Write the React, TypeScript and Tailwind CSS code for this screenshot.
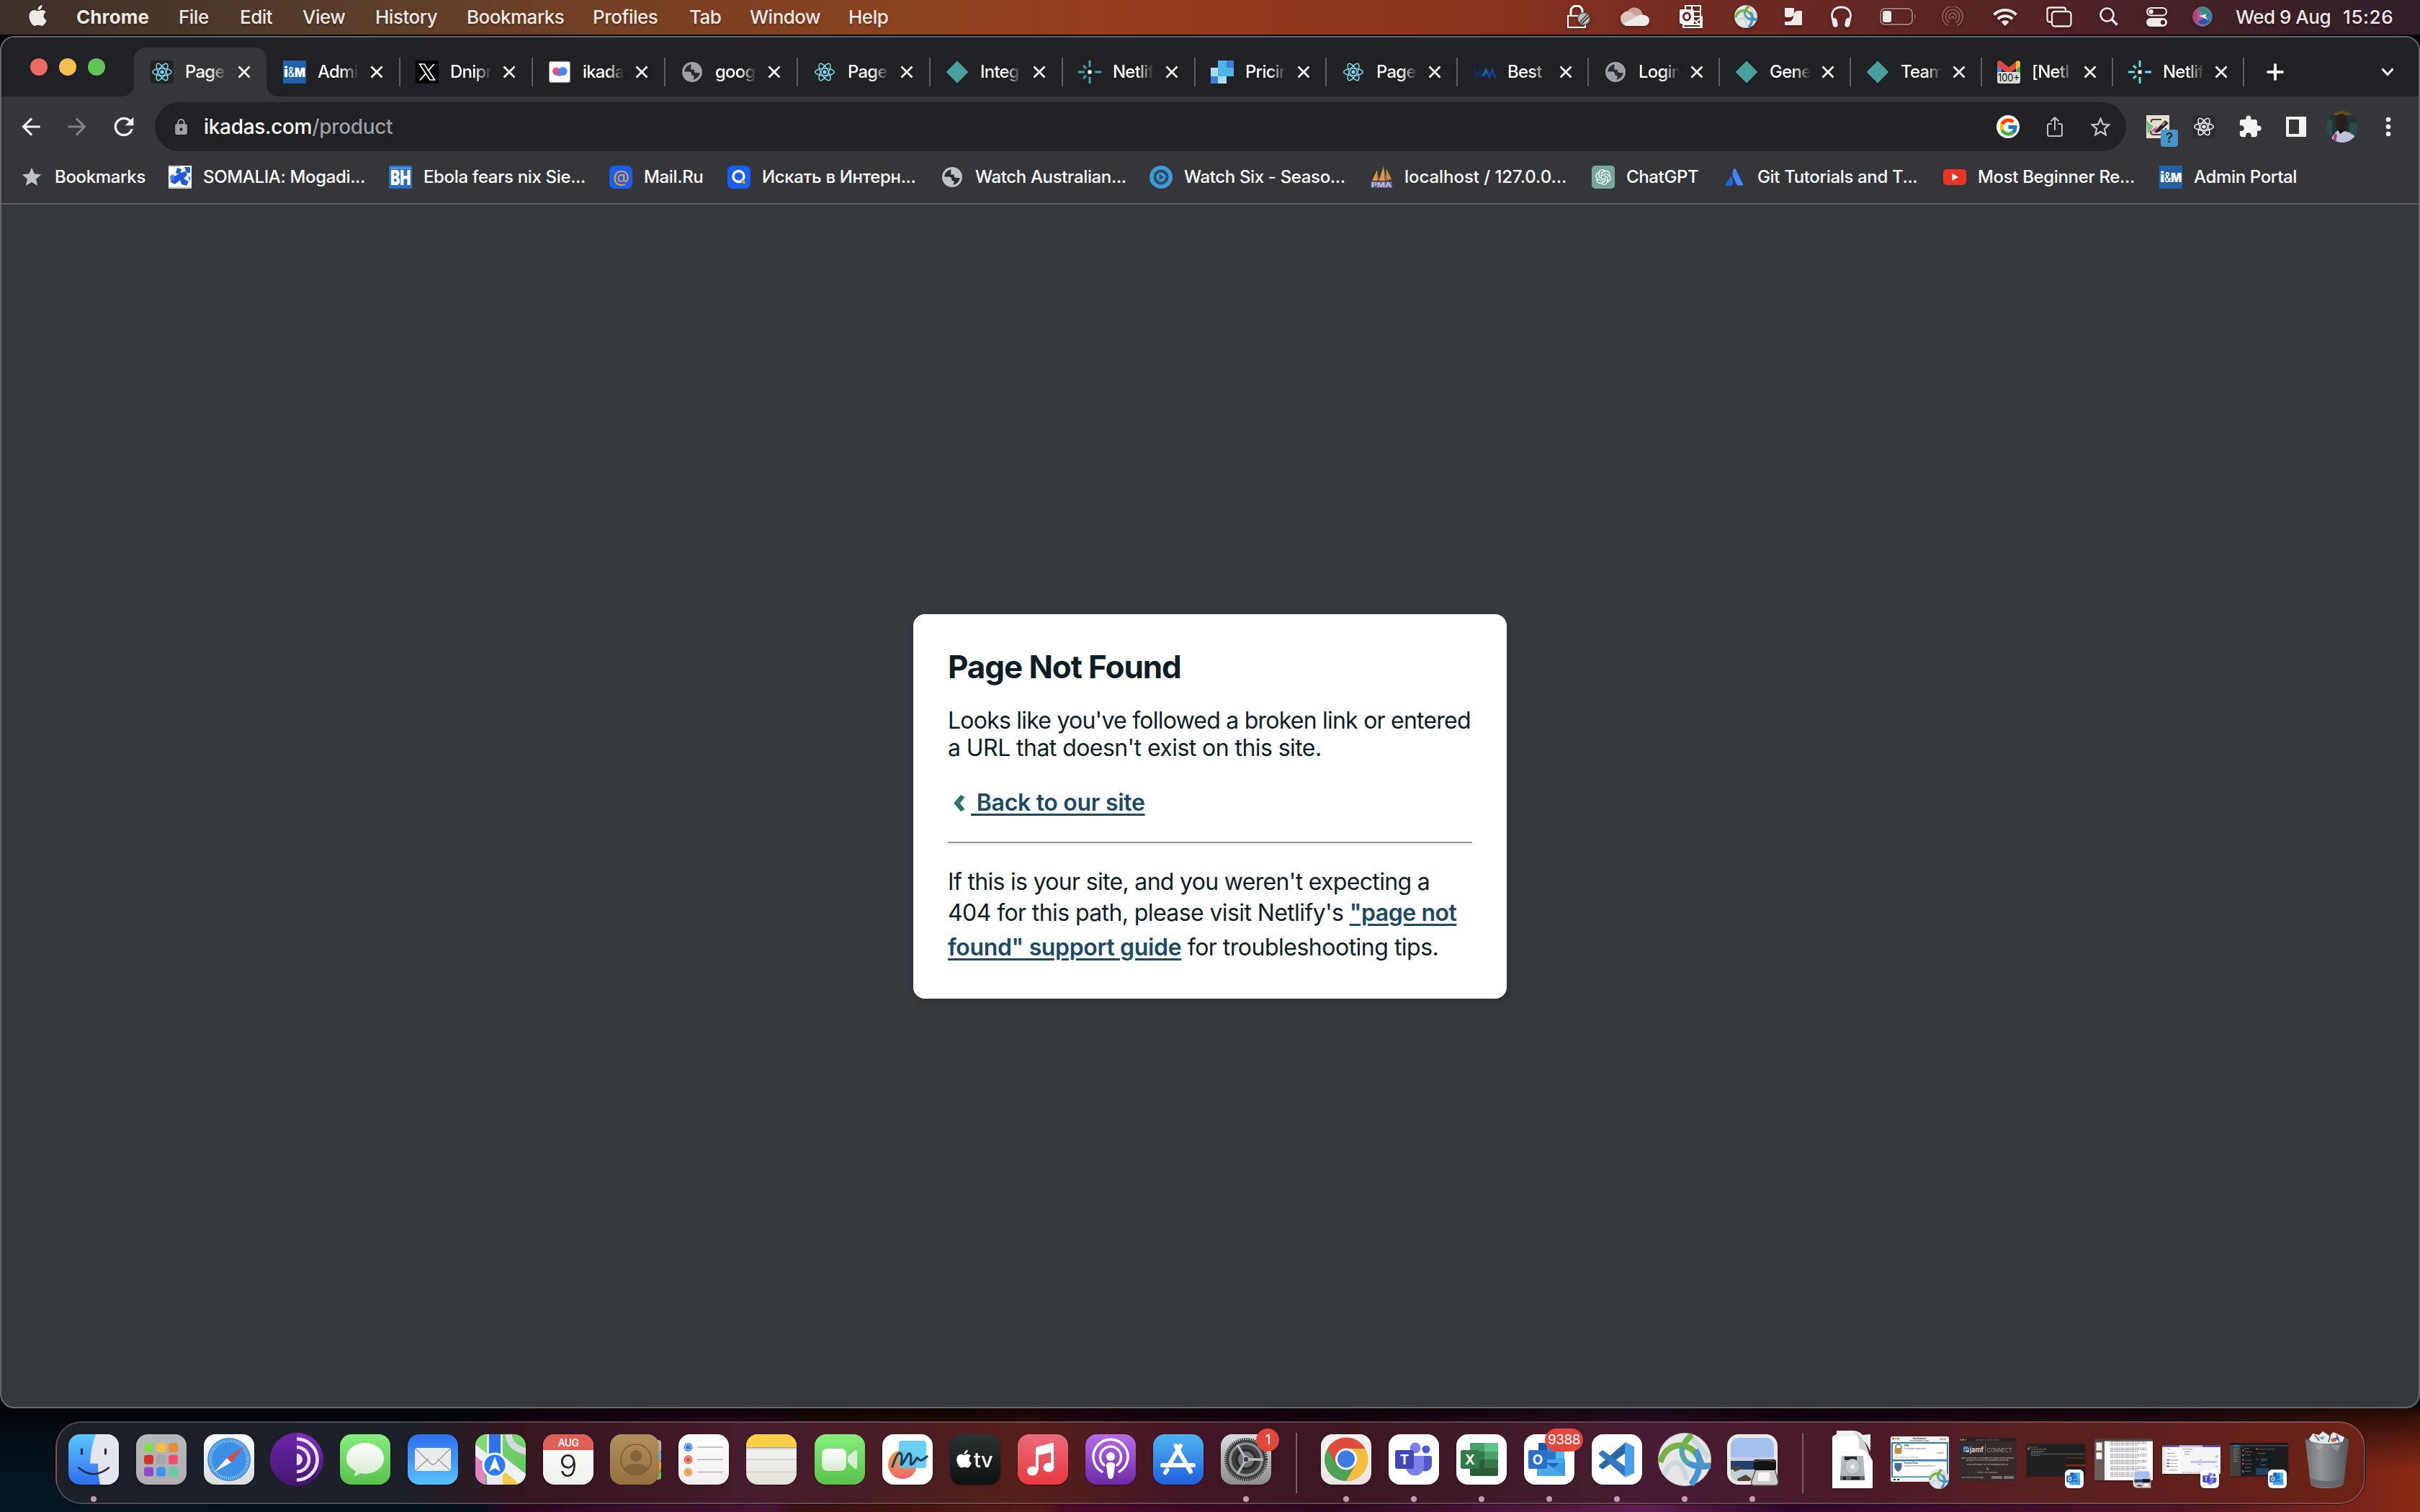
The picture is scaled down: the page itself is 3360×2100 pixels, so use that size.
import React from "react";
import { FaApple } from "react-icons/fa";
import { FcGoogle } from "react-icons/fc";
import { IoShareOutline } from "react-icons/io5";
import { MdArrowBack, MdArrowForward, MdExtension, MdLock, MdPublic, MdRefresh, MdStar, MdStarBorder } from "react-icons/md";
import { RiOpenaiFill } from "react-icons/ri";

type Kids = { children?: React.ReactNode };

/* ---------- favicons (32 x 32) ---------- */

function Fav({ children }: Kids) {
  return (
    <svg viewBox="0 0 32 32" className="size-8 shrink-0">
      {children}
    </svg>
  );
}

function Atom({ color, bg }: { color: string; bg: string }) {
  return (
    <Fav>
      <rect width="32" height="32" rx="4" fill={bg} />
      <g fill="none" stroke={color} strokeWidth="1.5">
        <ellipse cx="16" cy="16" rx="13.2" ry="5" />
        <ellipse cx="16" cy="16" rx="13.2" ry="5" transform="rotate(60 16 16)" />
        <ellipse cx="16" cy="16" rx="13.2" ry="5" transform="rotate(120 16 16)" />
      </g>
      <circle cx="16" cy="16" r="2.6" fill={color} />
    </Fav>
  );
}

function ImBank() {
  return (
    <Fav>
      <rect width="32" height="32" fill="#2460a7" />
      <text x="1" y="23" textLength="6" lengthAdjust="spacingAndGlyphs" fontSize="19" fontWeight="900" fill="#fff" fontFamily="Inter, sans-serif">
        i
      </text>
      <text x="7" y="23" textLength="9" lengthAdjust="spacingAndGlyphs" fontSize="18" fill="#fff" fontFamily="Inter, sans-serif">
        &amp;
      </text>
      <text x="16" y="23" textLength="15" lengthAdjust="spacingAndGlyphs" fontSize="18" fontWeight="900" fill="#fff" fontFamily="Inter, sans-serif">
        M
      </text>
    </Fav>
  );
}

function XLogo() {
  return (
    <Fav>
      <rect width="32" height="32" fill="#000" />
      <path d="M5.5 5h6.6l14.4 22h-6.6z" fill="none" stroke="#fff" strokeWidth="1.7" />
      <path d="M25.5 5 17 15M14.6 17.6 6 27.5" stroke="#fff" strokeWidth="1.9" fill="none" />
    </Fav>
  );
}

function Ikadas() {
  return (
    <Fav>
      <rect x="1.5" y="1.5" width="29" height="29" rx="2" fill="#fff" />
      <circle cx="11.5" cy="15" r="5.5" fill="#e0567c" />
      <circle cx="20.5" cy="15" r="6" fill="#3f8df0" />
      <path d="M9 18.500a8 5 0 0 0 13 1.500c-3 1-6-2-7-5z" fill="#9a62b8" />
    </Fav>
  );
}

function Globe({ color }: { color: string }) {
  return (
    <span className="flex size-8 shrink-0 items-center justify-center">
      <svg viewBox="0 0 28 28" className="size-7">
        <circle cx="14" cy="14" r="14" fill={color} />
        <path
          d="M13 3.500c-5 .5-9.500 5-9.800 10h6.300c2.500 0 4 1.700 4 4v1.500h3v2.500q0 1.500-1.500 3c5-.5 9.300-4.500 9.700-9.500h-5q-3 0-3-3v-1.500h-4.500V7.500q0-2 .8-4z"
          fill="#2a2b2f"
        />
      </svg>
    </span>
  );
}

function Diamond() {
  return (
    <Fav>
      <path d="M16 2 30 16 16 30 2 16z" fill="#489f9d" stroke="#489f9d" strokeWidth="2" strokeLinejoin="round" />
    </Fav>
  );
}

function Spark({ color }: { color: string }) {
  return (
    <Fav>
      <path d="M16 0v9M16 23v9M0 16h9M23 16h9M7 7l4 4M7 25l4-4" stroke={color} strokeWidth="3" fill="none" />
      <rect x="13.5" y="13.5" width="5" height="5" fill="#fff" />
    </Fav>
  );
}

function Pricing() {
  return (
    <Fav>
      <path d="M10 0h12v22H10z" fill="#4db5e6" />
      <path d="M22 0h10v10H22z" fill="#3b7de0" />
      <path d="M22 10h10v12H22z" fill="#4fb3e8" />
      <path d="M0 10h10v12H0zM10 22h12v10H10z" fill="#a9dcf3" />
      <path d="M0 22h10v10H0z" fill="#3b7de0" />
    </Fav>
  );
}

function Wm() {
  return (
    <Fav>
      <path d="M1 11l4 12 4-8 3 8 3-12" stroke="#0c2f5c" strokeWidth="2.5" fill="none" />
      <path d="M15 23l4-10 4 10 4-10 4 11" stroke="#123f9a" strokeWidth="3" fill="none" />
      <path d="M14 21l4-8 2 6" stroke="#167a86" strokeWidth="2" fill="none" />
    </Fav>
  );
}

function Gmail() {
  return (
    <Fav>
      <path d="M0 4h6v20H0z" fill="#4d88ee" />
      <path d="M26 4h6v20h-6z" fill="#45a559" />
      <path d="M26 1.500Q31 -2 32 3.500V8l-6 5z" fill="#f2bb3c" />
      <path d="M0 3.500Q1-2 6 1.500L16 9.500 26 1.500V11l-10 8L0 7.500z" fill="#dd4b3e" />
      <rect y="16" width="32" height="16" rx="3" fill="#d8d9d6" />
      <text x="16" y="29" textAnchor="middle" textLength="30" lengthAdjust="spacingAndGlyphs" fontSize="15" fill="#111" fontFamily="Inter, sans-serif">
        100+
      </text>
    </Fav>
  );
}

function Somalia() {
  return (
    <Fav>
      <rect width="32" height="32" fill="#fff" />
      <path d="M0 0h16v2H0zM0 29.500h32V32H0z" fill="#c9c9c9" />
      <path d="M22 2h8v8h-5zM12 3l6 2-2 6h-6zM16 10l8-2 2 5-5 5 7 4-3 6-7-2-2-6-7 6-6-3 2-8 5-1z" fill="#2059d6" />
      <path d="M2 14l5-2 1 6-5 5zM27 14l4 3-2 5z" fill="#4a7ae2" />
    </Fav>
  );
}

function Bh() {
  return (
    <Fav>
      <rect width="32" height="32" fill="#2a6fc4" />
      <path d="M2 2.500h28v2H2z" fill="#6b9dda" />
      <text x="16" y="26.5" textAnchor="middle" textLength="28" lengthAdjust="spacingAndGlyphs" fontSize="28" fontWeight="900" fill="#fff" fontFamily="Inter, sans-serif">
        BH
      </text>
    </Fav>
  );
}

function MailRu() {
  return (
    <Fav>
      <rect width="32" height="32" rx="7" fill="#1a5ff0" />
      <text x="16" y="22.5" textAnchor="middle" fontSize="23" fontWeight="500" fill="#e99a2c" fontFamily="Inter, sans-serif">
        @
      </text>
    </Fav>
  );
}

function QSearch() {
  return (
    <Fav>
      <rect width="32" height="32" rx="7" fill="#1a5ff0" />
      <circle cx="15.5" cy="15" r="7.5" fill="none" stroke="#fff" strokeWidth="3.4" />
      <path d="M20 20l4 5" stroke="#e99a2c" strokeWidth="3.5" />
    </Fav>
  );
}

function WatchSix() {
  return (
    <Fav>
      <circle cx="16" cy="16" r="16" fill="#3f9ad8" />
      <circle cx="16" cy="16" r="8.5" fill="none" stroke="#2d4d68" strokeWidth="4" />
      <path d="M13.500 11.500 20 16l-6.500 4.500z" fill="#2d4d68" />
    </Fav>
  );
}

function PhpMyAdmin() {
  return (
    <Fav>
      <path d="M3 21 10 6l1 15zM12.500 21 19 1l2 20z" fill="#e8923c" />
      <path d="M22 21 23 4l7 15z" fill="#c98548" />
      <path d="M10 6l3 14h-2zM19 0l4 20h-2z" fill="#7d6450" />
      <path d="M1 22h30v9H1z" fill="#5e5d92" />
      <text x="16" y="30" textAnchor="middle" textLength="28" lengthAdjust="spacingAndGlyphs" fontSize="9.5" fontWeight="700" fill="#c3c2d8" fontFamily="Inter, sans-serif">
        PMA
      </text>
    </Fav>
  );
}

function ChatGpt() {
  return (
    <span className="flex size-8 shrink-0 items-center justify-center rounded-[5px] bg-[#75a99b]">
      <RiOpenaiFill size={26} color="#fff" />
    </span>
  );
}

function Atlassian() {
  return (
    <Fav>
      <path d="M11 15c3 3 4 8 2 13H4.500c-1 0-1-1-.6-1.600z" fill="#2566dd" />
      <path d="M15.500 4.500c-3 5-2.500 9 0 13.500l4.500 9.500h7.500c1 0 1-1 .6-1.600L17.500 4.500c-.6-1-1.400-1-2 0z" fill="#4289ff" />
    </Fav>
  );
}

function YouTube() {
  return (
    <Fav>
      <rect y="5" width="32" height="22" rx="5" fill="#ea3323" />
      <path d="M12.500 11 21 16l-8.500 5z" fill="#fff" />
    </Fav>
  );
}

/* ---------- macOS menu bar ---------- */

const menus: [string, string][] = [
  ["File", "w-[85px]"],
  ["Edit", "w-[87px]"],
  ["View", "w-[101px]"],
  ["History", "w-[127px]"],
  ["Bookmarks", "w-[175px]"],
  ["Profiles", "w-[134px]"],
  ["Tab", "w-[84px]"],
  ["Window", "w-[137px]"],
  ["Help", "w-[120px]"],
];

function CiscoBall({ className }: { className: string }) {
  return (
    <svg viewBox="0 0 74 74" className={className}>
      <circle cx="37" cy="37" r="36.5" fill="#e4e6e8" stroke="#b9bfc4" strokeWidth="1" />
      <path d="M8 58C20 34 34 36 40 66M48 8c10 10 16 20 22 26" stroke="#cdd6d9" strokeWidth="7" fill="none" />
      <path d="M3 41C10 20 24 16 36 18c16 4 22 18 26 28" stroke="#78b045" strokeWidth="8.5" fill="none" />
      <path d="M47 3C34 14 30 26 36 36c4 8 14 11 37 9" stroke="#5aa6a0" strokeWidth="7.5" fill="none" />
      <path d="M47 3C41 8 37 13 35 19" stroke="#78b045" strokeWidth="8" fill="none" />
      <path d="M52 24c10 14 6 32-6 48" stroke="#4594cf" strokeWidth="8.5" fill="none" />
      <path d="M42 42c8 6 18 6 31 4" stroke="#4594cf" strokeWidth="7.5" fill="none" />
    </svg>
  );
}

function StatusIcons() {
  const ink = "#efe9e8";
  return (
    <div className="flex items-center drop-shadow-[0_2px_2px_rgba(0,0,0,0.3)]">
      <svg viewBox="0 0 32 32" className="mr-[42px] h-8 w-8">
        <path d="M5 15V8a8 7 0 0 1 16 0v7" stroke="#fff" strokeWidth="3" fill="none" />
        <path d="M1 15h24v16H1z" stroke="#fff" strokeWidth="2" fill="none" />
        <circle cx="23" cy="19" r="8.5" fill="#bdbdbd" stroke="#555" strokeWidth="1.5" />
        <path d="M17.500 24 28 13M20 26 30 16" stroke="#444" strokeWidth="1.8" />
      </svg>
      <svg viewBox="0 0 40 26" className="mr-[42px] h-[26px] w-10">
        <path d="M9 7C13-2 27-2 31 10L20 14z" fill="#c9a19a" />
        <path d="M10 26A10 10 0 0 1 4 8c4-4 9-2 14 2l10 6L8 26z" fill="#dac3bf" />
        <path d="M4 23 24 12q4-3 9-1a7.500 7.500 0 0 1-1 15H10q-4 0-6-3z" fill={ink} />
      </svg>
      <svg viewBox="0 0 32 32" className="mr-[44px] h-8 w-8">
        <path d="M8 6V1h21v26H5v4h26V17l-9 7" fill="none" stroke="#fff" strokeWidth="2" />
        <path d="M17 1v8h12M20 16h9M20 21l11 9M19 9v8" fill="none" stroke="#fff" strokeWidth="2" />
        <rect x="0" y="6" width="20" height="20" rx="2" fill="#fff" />
        <ellipse cx="10" cy="16" rx="4.5" ry="5" fill="none" stroke="#6e2a22" strokeWidth="3" />
      </svg>
      <CiscoBall className="mr-[38px] h-8 w-8" />
      <svg viewBox="0 0 24 24" className="mr-[40px] h-6 w-6" fill={ink}>
        <path d="M0 0h13v6q0 7-6 7H2q-2 0-2-2zM24 4v20H0v-5h5q6 0 7-7 1-8 6-8z" />
      </svg>
      <svg viewBox="0 0 29 30" className="mr-[39px] h-[30px] w-[29px]">
        <path d="M3 20C-1 10 4 2 14.500 2S30 10 26 20" fill="none" stroke={ink} strokeWidth="2.8" />
        <rect x="2" y="17" width="7" height="13" rx="3.5" transform="rotate(-12 5 23)" fill={ink} />
        <rect x="20" y="17" width="7" height="13" rx="3.5" transform="rotate(12 24 23)" fill={ink} />
      </svg>
      <svg viewBox="0 0 51 24" className="mr-[35px] h-6 w-[51px]">
        <rect x="1" y="1" width="44" height="22" rx="6" fill="none" stroke="#a17a7c" strokeWidth="2" />
        <rect x="4" y="4" width="12" height="16" rx="3" fill={ink} />
        <path d="M48 8q3 4 0 8z" fill="#a17a7c" />
      </svg>
      <svg viewBox="0 0 30 28" className="mr-[41px] h-7 w-[30px]" fill="none" stroke="#8d5a5b" strokeWidth="1.9" strokeLinecap="round">
        <path d="M8 26A14 14 0 1 1 22 26" />
        <path d="M10 22A9.500 9.500 0 1 1 20 22" />
        <path d="M12 18A5 5 0 1 1 18 18" />
        <circle cx="15" cy="15" r="1" />
      </svg>
      <svg viewBox="0 0 34 25" className="mr-[40px] h-[25px] w-[34px]" fill="none" stroke={ink} strokeWidth="4">
        <path d="M1.500 9.500A22 22 0 0 1 32.500 9.500" />
        <path d="M7 15.500A14 14 0 0 1 27 15.500" />
        <path d="M17 25l-5.500-5.500a8 8 0 0 1 11 0z" fill={ink} stroke="none" />
      </svg>
      <svg viewBox="0 0 36 29" className="mr-[38px] h-[29px] w-9" fill="none" stroke={ink} strokeWidth="2.3">
        <path d="M7 21.500H5q-3.500 0-3.500-3.500V5Q1.500 1.500 5 1.500h19Q27 1.500 27 5v1" />
        <rect x="8" y="7" width="26.5" height="20.5" rx="4" />
      </svg>
      <svg viewBox="0 0 26 26" className="mr-[39px] h-[26px] w-[26px]" fill="none" stroke={ink} strokeWidth="2.6">
        <circle cx="10.5" cy="10.5" r="9" />
        <path d="M17 17l7.500 7.500" strokeWidth="3.4" />
      </svg>
      <svg viewBox="0 0 29 27" className="mr-[35px] h-[27px] w-[29px]">
        <rect x="1" y="1" width="27" height="10.5" rx="5.25" fill="none" stroke={ink} strokeWidth="2" />
        <circle cx="6.5" cy="6.25" r="3.2" fill={ink} />
        <rect y="15" width="29" height="12" rx="6" fill={ink} />
        <circle cx="23" cy="21" r="3.2" fill="#472127" />
      </svg>
      <svg viewBox="0 0 28 28" className="mr-[32px] h-7 w-7">
        <defs>
          <linearGradient id="siri" x1="0" y1="0.5" x2="1" y2="0.5">
            <stop offset="0" stopColor="#c8285c" />
            <stop offset="0.45" stopColor="#a06aa8" />
            <stop offset="1" stopColor="#2a7fb8" />
          </linearGradient>
        </defs>
        <circle cx="14" cy="14" r="13.5" fill="url(#siri)" stroke="#6b6f8a" strokeWidth="1" />
        <path d="M8 4q9-5 15 4 3 5 1 6-8-1-16-10z" fill="#2b8f78" />
        <path d="M7 22q7-6 13-5l4 3q-8 9-17 2z" fill="#2b55b0" />
        <path d="M9 13l6-1 4-2-1 4 4 5-7-4z" fill="#fff" />
      </svg>
    </div>
  );
}

function MenuBar() {
  return (
    <header className="flex h-[48px] items-center bg-[linear-gradient(90deg,#3b302a_0%,#5a3e2a_15%,#784023_27%,#8b4321_37%,#973d1e_46%,#8a331e_61%,#762c21_69%,#5e2524_79%,#482127_89%,#2f1f2a_100%)] pb-[1.5px] text-[26px] font-[450] tracking-[-0.5px] text-[#efe9e6] [text-shadow:0_2px_3px_rgba(0,0,0,0.3)]">
      <FaApple size={33} className="mb-1 ml-[36px] w-[33px] shrink-0" />
      <span className="ml-[37px] w-[142px] font-bold tracking-[0.1px]">Chrome</span>
      {menus.map(([name, width]) => (
        <span key={name} className={width}>
          {name}
        </span>
      ))}
      <div className="ml-auto flex items-center">
        <StatusIcons />
        <span className="w-[149px] whitespace-nowrap">Wed 9 Aug</span>
        <span className="w-[107px] tracking-[0.6px]">15:26</span>
      </div>
    </header>
  );
}

/* ---------- Chrome window ---------- */

type TabInfo = { title: string; icon: React.ReactNode };

const tabs: TabInfo[] = [
  { title: "Page", icon: <Atom color="#7fd6f2" bg="#222222" /> },
  { title: "Admi", icon: <ImBank /> },
  { title: "Dnipr", icon: <XLogo /> },
  { title: "ikada", icon: <Ikadas /> },
  { title: "goog", icon: <Globe color="#9aa0a6" /> },
  { title: "Page", icon: <Atom color="#7fd6f2" bg="#222222" /> },
  { title: "Integ", icon: <Diamond /> },
  { title: "Netlif", icon: <Spark color="#45a5a5" /> },
  { title: "Pricin", icon: <Pricing /> },
  { title: "Page", icon: <Atom color="#7fd6f2" bg="#222222" /> },
  { title: "Best", icon: <Wm /> },
  { title: "Login", icon: <Globe color="#9aa0a6" /> },
  { title: "Gene", icon: <Diamond /> },
  { title: "Team", icon: <Diamond /> },
  { title: "[Netl", icon: <Gmail /> },
  { title: "Netlif", icon: <Spark color="#5fe0de" /> },
];

function Tab({ tab, index }: { tab: TabInfo; index: number }) {
  const active = index === 0;
  return (
    <div
      className={
        (index < 8 ? "w-[184px]" : "w-[182px]") +
        " relative flex h-[68px] shrink-0 items-center " +
        (active ? "rounded-t-[16px] bg-[#35363a]" : "")
      }
    >
      {active && (
        <>
          <span className="absolute bottom-0 -left-4 size-4 bg-[radial-gradient(circle_at_0_0,transparent_15.5px,#35363a_16px)]" />
          <span className="absolute -right-4 bottom-0 size-4 bg-[radial-gradient(circle_at_100%_0,transparent_15.5px,#35363a_16px)]" />
        </>
      )}
      <span className={(index > 1 ? "bg-[#5c5e61]" : "bg-transparent") + " h-10 w-0.5"} />
      <span className="ml-[21px] flex">{tab.icon}</span>
      <span className="ml-4 w-[57px] overflow-hidden whitespace-nowrap text-[24px] font-[450] tracking-[-0.8px] text-white [mask-image:linear-gradient(90deg,#000_60%,transparent_100%)]">
        {tab.title}
      </span>
      <svg viewBox="0 0 18 18" className={(index < 8 ? "ml-[16px]" : "ml-[15px]") + " size-[18px]"} stroke="#fff" strokeWidth="2.7">
        <path d="M1.500 1.500l15 15M16.500 1.500l-15 15" />
      </svg>
    </div>
  );
}

function TabStrip() {
  return (
    <div className="flex h-[82px] items-end bg-[#202124]">
      <div className="mb-[29px] ml-[40px] flex w-[144px] gap-4">
        <span className="size-6 rounded-full bg-[#ec6a5f]" />
        <span className="size-6 rounded-full bg-[#f4bf50]" />
        <span className="size-6 rounded-full bg-[#61c455]" />
      </div>
      {tabs.map((tab, i) => (
        <Tab key={i} tab={tab} index={i} />
      ))}
      <div className="flex h-[68px] items-center">
        <span className="h-10 w-0.5 bg-[#5c5e61]" />
        <svg viewBox="0 0 24 24" className="ml-[31px] size-6" stroke="#fff" strokeWidth="3.8" strokeLinecap="round">
          <path d="M12 2v20M2 12h20" />
        </svg>
        <svg viewBox="0 0 18 12" className="ml-[135px] h-3 w-[18px]" fill="none" stroke="#fff" strokeWidth="3">
          <path d="M1.500 1.500 9 9.500l7.500-8" />
        </svg>
      </div>
    </div>
  );
}

function Toolbar() {
  return (
    <div className="flex h-[84px] items-center bg-[#35363a] text-[#f1f3f4]">
      <MdArrowBack size={38} className="ml-[22px]" />
      <MdArrowForward size={38} className="ml-[26px] text-[#7f8184]" />
      <MdRefresh size={40} className="ml-[26px]" />
      <div className="ml-[23px] flex h-[68px] w-[2737px] items-center rounded-full bg-[#202124] text-[28px] font-[450]">
        <MdLock size={25} className="ml-[24px] text-[#9aa0a6]" />
        <span className="ml-[19px] tracking-[-0.32px] text-white">
          ikadas.com<span className="text-[#9aa0a6]">/product</span>
        </span>
        <span className="mr-[33px] ml-auto flex size-8 items-center justify-center rounded-full bg-white">
          <FcGoogle size={29} />
        </span>
        <IoShareOutline size={32} className="mr-[30px] text-[#bdc1c6]" />
        <MdStarBorder size={35} className="mr-[18px] text-[#bdc1c6]" />
      </div>
      <span className="relative ml-[28px] size-8">
        <Fav>
          <rect width="32" height="32" fill="#e8dfd2" />
          <path d="M0 7l10 9L2 26z" fill="#6ec47b" />
          <path d="M6 22l9-7-2 9z" fill="#c95fb0" />
          <path d="M21 6H10q-4 0-3 4M6 22q0 5 4 5h13q4 0 4-5v-4" fill="none" stroke="#4b3d33" strokeWidth="2.2" />
          <path d="M13 21 26 7l5 4-13 12-6 2z" fill="#2c2622" />
          <path d="M22 14l4-4" stroke="#b9aa96" strokeWidth="2" />
        </Fav>
        <span className="absolute top-5 left-5 flex size-6 items-center justify-center rounded-[4px] bg-[#4a94c8] text-[19px] font-medium text-[#202124]">?</span>
      </span>
      <span className="ml-[32px] flex">
        <Atom color="#f1f3f4" bg="#2c2d31" />
      </span>
      <MdExtension size={34} className="ml-[31px]" />
      <svg viewBox="0 0 28 28" className="ml-[33px] size-7">
        <path d="M0 0h28v28H0zM4 4v20h14V4z" fill="#f1f3f4" fillRule="evenodd" />
      </svg>
      <svg viewBox="0 0 44 44" className="ml-[28px] size-11">
        <clipPath id="avatar">
          <circle cx="22" cy="22" r="22" />
        </clipPath>
        <g clipPath="url(#avatar)">
          <rect width="44" height="44" fill="#1c3434" />
          <path d="M0 12h8v32H0zM32 16h12v20H32z" fill="#2c4a48" />
          <path d="M10 0h26v6H10z" fill="#5d4a1e" />
          <path d="M6 44q2-13 12-18l14 4 12 8v6z" fill="#bcc3d8" />
          <path d="M15 24l4 8 9-6-3-5z" fill="#1c1512" />
          <ellipse cx="21" cy="15" rx="8.5" ry="11" fill="#2a201b" />
          <path d="M11 31l4 2-2 11H9z" fill="#b8386a" />
        </g>
      </svg>
      <svg viewBox="0 0 8 28" className="ml-[38px] h-7 w-2" fill="#f1f3f4">
        <circle cx="4" cy="4" r="3.3" />
        <circle cx="4" cy="14" r="3.3" />
        <circle cx="4" cy="24" r="3.3" />
      </svg>
    </div>
  );
}

const bookmarks: { label: string; icon: React.ReactNode; slot: string }[] = [
  { label: "Bookmarks", icon: <MdStar size={32} color="#bdc1c6" />, slot: "w-[206px]" },
  { label: "SOMALIA: Mogadi...", icon: <Somalia />, slot: "w-[306px]" },
  { label: "Ebola fears nix Sie...", icon: <Bh />, slot: "w-[306px]" },
  { label: "Mail.Ru", icon: <MailRu />, slot: "w-[164px]" },
  { label: "Искать в Интерн...", icon: <QSearch />, slot: "w-[296px]" },
  { label: "Watch Australian...", icon: <Globe color="#bdc1c6" />, slot: "w-[290px]" },
  { label: "Watch Six - Seaso...", icon: <WatchSix />, slot: "w-[306px]" },
  { label: "localhost / 127.0.0...", icon: <PhpMyAdmin />, slot: "w-[308px] tracking-[-0.05px]" },
  { label: "ChatGPT", icon: <ChatGpt />, slot: "w-[182px]" },
  { label: "Git Tutorials and T...", icon: <Atlassian />, slot: "w-[306px]" },
  { label: "Most Beginner Re...", icon: <YouTube />, slot: "w-[300px]" },
  { label: "Admin Portal", icon: <ImBank />, slot: "w-[220px]" },
];

function BookmarksBar() {
  return (
    <div className="flex h-[66px] items-center border-b-2 border-[#5c5e61] bg-[#35363a] pb-[8px] pl-[26px] text-[24px] font-[450] tracking-[-0.35px] text-white">
      {bookmarks.map((b) => (
        <div key={b.label} className={b.slot + " flex shrink-0 items-center gap-4 whitespace-nowrap"}>
          {b.icon}
          <span>{b.label}</span>
        </div>
      ))}
    </div>
  );
}

function NotFoundCard() {
  return (
    <main className="h-[534px] w-[824px] rounded-[16px] bg-white px-12 pt-[45px] text-[32px] whitespace-nowrap text-[#0e1e25] shadow-[0_4px_8px_rgba(14,30,37,0.2)]">
      <h1 className="text-[44px] leading-[56px] font-bold tracking-[-1.1px]">Page Not Found</h1>
      <p className="mt-[28px] leading-[38px] tracking-[-0.77px]">
        Looks like you've followed a broken link or entered
        <br />
        <span className="tracking-[-0.56px]">a URL that doesn't exist on this site.</span>
      </p>
      <p className="mt-[37px] flex h-10 items-center font-semibold tracking-[-0.3px] whitespace-pre text-[#1d4a63]">
        <svg viewBox="0 0 16 24" className="mr-[8px] ml-2 h-[23px] w-4">
          <path d="M10 0 16 3 9 12l7 9-6 3L0 12z" fill="#2d7368" />
        </svg>
        <a className="underline decoration-[3px] underline-offset-[4px]">{" Back to our site"}</a>
      </p>
      <hr className="mt-[34px] h-1 border-0 border-t-2 border-t-[#9a9a9a] bg-[#eeeeee]" />
      <div className="mt-[30px] tracking-[-0.45px]">
        <div className="leading-[43px] tracking-[-0.68px]">If this is your site, and you weren't expecting a</div>
        <div className="leading-[43px] tracking-[-0.6px]">
          404 for this path, please visit Netlify's{" "}
          <a className="font-semibold tracking-[-0.45px] text-[#1d4a63] underline decoration-[3px] underline-offset-[4px]">"page not</a>
        </div>
        <div className="leading-[53px]">
          <a className="font-semibold tracking-[-0.35px] text-[#1d4a63] underline decoration-[3px] underline-offset-[4px]">found" support guide</a>
          <span className="tracking-[-0.5px]"> for troubleshooting tips.</span>
        </div>
      </div>
    </main>
  );
}

/* ---------- Dock icons (70 x 70) ---------- */

function Grad({ id, from, to }: { id: string; from: string; to: string }) {
  return (
    <linearGradient id={id} x1="0" y1="0" x2="0" y2="1">
      <stop offset="0" stopColor={from} />
      <stop offset="1" stopColor={to} />
    </linearGradient>
  );
}

function AppIcon({ id, from, to, children }: { id: string; from: string; to: string } & Kids) {
  return (
    <svg viewBox="0 0 70 70" className="size-[70px] overflow-visible drop-shadow-[0_1px_1px_rgba(0,0,0,0.4)]">
      <defs>
        <Grad id={"g-" + id} from={from} to={to} />
        <clipPath id={"c-" + id}>
          <rect width="70" height="70" rx="16" />
        </clipPath>
      </defs>
      <g clipPath={"url(#c-" + id + ")"}>
        <rect width="70" height="70" fill={"url(#g-" + id + ")"} />
        {children}
      </g>
    </svg>
  );
}

const Finder = () => (
  <AppIcon id="finder" from="#5ac8fa" to="#2f6df0">
    <path d="M38 0h32v70H44q-3-13-3-29H30Q31 18 38 0z" fill="#e3e6ee" />
    <path d="M38 0Q31 18 30 40.500h10.500" fill="none" stroke="#b5c4dc" strokeWidth="1" />
    <path d="M18.500 21v6M51.500 21v6" stroke="#20242c" strokeWidth="3" strokeLinecap="round" />
    <path d="M14 46.500q20 17.500 42 0" fill="none" stroke="#1d2c48" strokeWidth="2.6" strokeLinecap="round" />
  </AppIcon>
);

const padColors = ["#7fdc4f", "#f4bf41", "#e98e34", "#d63428", "#a2a7aa", "#f0516a", "#9147c8", "#3a97f3", "#68c9a2"];
const Launchpad = () => (
  <AppIcon id="launchpad" from="#b6b7bb" to="#aeaeb3">
    {padColors.map((c, i) => (
      <rect key={c} x={11 + (i % 3) * 17} y={12 + Math.floor(i / 3) * 16.8} width="13" height="13" rx="3.5" fill={c} />
    ))}
  </AppIcon>
);

const Safari = () => (
  <AppIcon id="safari" from="#ffffff" to="#dcdcde">
    <circle cx="35" cy="35" r="30" fill="#3b8fe4" />
    <circle cx="35" cy="35" r="26" fill="none" stroke="#b8dcf8" strokeWidth="4.5" strokeDasharray="0.9 1.82" />
    <path d="M56 17 38 39l-6-6z" fill="#e0483c" />
    <path d="M14 53 32 33l6 6z" fill="#f4f5f6" />
  </AppIcon>
);

const Tor = () => (
  <svg viewBox="0 0 74 74" className="size-[74px]">
    <defs>
      <Grad id="tor" from="#8130c4" to="#3c1465" />
    </defs>
    <circle cx="37" cy="37" r="37" fill="url(#tor)" />
    <path d="M37 0a37 37 0 0 0 0 74z" fill="#4e1a82" opacity="0.45" />
    <path d="M37 8.500a28.500 28.500 0 0 1 0 57M37 20a17 17 0 0 1 0 34" fill="none" stroke="#ece2f8" strokeWidth="4.6" />
    <path d="M37 29a8 8 0 0 1 0 16z" fill="#ece2f8" />
  </svg>
);

const Messages = () => (
  <AppIcon id="messages" from="#85ee7c" to="#58c24c">
    <defs>
      <Grad id="bubble" from="#ffffff" to="#d3ebce" />
    </defs>
    <path d="M35 12c14 0 26 9 26 21.500S49 55 35 55q-4 0-7-1-3 3.500-9 4 3-4 2.500-7Q9 45 9 33.500C9 21 21 12 35 12z" fill="url(#bubble)" />
  </AppIcon>
);

const Mail = () => (
  <AppIcon id="mail" from="#2f6ff0" to="#58c0fa">
    <rect x="10" y="19" width="50" height="32" rx="3" fill="#ececec" />
    <path d="M11 50 29 34M59 50 41 34M11 20l20 20q4 4 8 0l20-20" fill="none" stroke="#9c9c9e" strokeWidth="1.4" />
  </AppIcon>
);

const Maps = () => (
  <AppIcon id="maps" from="#78d470" to="#5cc45c">
    <path d="M0 14l14 12v44H0z" fill="#dc85c2" />
    <path d="M0 0h16v28L0 12z" fill="#7fdc74" />
    <path d="M0 14v16l58 46 16-12V58L30 24v14z" fill="#eef0f3" />
    <path d="M36 48l26 22H36z" fill="#f4cb44" />
    <path d="M16 0h22v70H16z" fill="#e9ebef" />
    <path d="M19 0h16v30H19z" fill="#2f74e8" />
    <path d="M46 0q2 20 26 24" fill="none" stroke="#d6d8dc" strokeWidth="9" />
    <circle cx="27" cy="43" r="16" fill="#2f7bf0" stroke="#f4f6f9" strokeWidth="3" />
    <path d="M27 31l8 21-8-5-8 5z" fill="#fff" />
  </AppIcon>
);

const Calendar = () => (
  <AppIcon id="calendar" from="#ffffff" to="#f1efeb">
    <rect width="70" height="22" fill="#e05f54" />
    <text x="35" y="16.5" textAnchor="middle" fontSize="14" fontWeight="600" letterSpacing="-0.5" fill="#fff" fontFamily="Inter, sans-serif">
      AUG
    </text>
    <text x="35" y="58.5" textAnchor="middle" fontSize="42" fontWeight="300" fill="#222" fontFamily="Inter, sans-serif">
      9
    </text>
  </AppIcon>
);

const Contacts = () => (
  <svg viewBox="0 0 72 70" className="h-[70px] w-[72px]">
    <rect x="50" y="8" width="21" height="18" rx="4" fill="#b4b2ac" />
    <rect x="50" y="24" width="21" height="14" rx="3" fill="#57b4ee" />
    <rect x="50" y="37" width="21" height="14" rx="3" fill="#ee9a35" />
    <rect x="50" y="50" width="21" height="13" rx="4" fill="#68c45f" />
    <defs>
      <Grad id="contacts" from="#b38f5e" to="#97703f" />
    </defs>
    <rect width="68" height="70" rx="16" fill="url(#contacts)" />
    <circle cx="36" cy="35" r="21" fill="none" stroke="#7c5c35" strokeWidth="1.6" />
    <circle cx="36" cy="30" r="8" fill="#84633a" />
    <path d="M19 48q4-7 17-7t17 7q-6 9-17 9t-17-9z" fill="#84633a" />
  </svg>
);

const Reminders = () => (
  <AppIcon id="reminders" from="#ffffff" to="#f1efec">
    {["#3478f0", "#e0503f", "#e8953a"].map((c, i) => (
      <g key={c}>
        <circle cx="13.5" cy={18 + i * 17.3} r="5.2" fill="none" stroke={c} strokeWidth="1.5" />
        <circle cx="13.5" cy={18 + i * 17.3} r="3.6" fill={c} />
        <path d={"M26 " + (18 + i * 17.3) + "h36"} stroke="#b4b4b6" strokeWidth="1.5" />
      </g>
    ))}
  </AppIcon>
);

const Notes = () => (
  <AppIcon id="notes" from="#f8f7f4" to="#e5e2db">
    <rect width="70" height="18" fill="#f8cf47" />
    <path d="M0 18.700h70" stroke="#a8a498" strokeWidth="1.5" />
    <path d="M0 21h70" stroke="#b8b4aa" strokeWidth="1" strokeDasharray="1 1.5" />
    <path d="M0 35h70M0 52.500h70" stroke="#cfcdc8" strokeWidth="1.3" />
  </AppIcon>
);

const FaceTime = () => (
  <AppIcon id="facetime" from="#85ee7c" to="#58c24c">
    <defs>
      <Grad id="camera" from="#ffffff" to="#d3ebce" />
    </defs>
    <rect x="10" y="20" width="34" height="31" rx="8" fill="url(#camera)" />
    <path d="M46 31 56 22q3-1 3 2v22q0 3-3 2l-10-9z" fill="#d9ecd6" />
  </AppIcon>
);

const Freeform = () => (
  <AppIcon id="freeform" from="#ffffff" to="#ffffff">
    <defs>
      <Grad id="blob" from="#f3a13c" to="#ee6a6e" />
    </defs>
    <circle cx="28" cy="42" r="20" fill="url(#blob)" />
    <rect x="23" y="9" width="38" height="38" rx="3" fill="#55c8f2" opacity="0.88" />
    <path d="M14 45c4-12 8-22 12-18s-3 20 2 14 8-18 11-13-3 18 3 13 5-11 8-7 4 3 12-3" fill="none" stroke="#17405f" strokeWidth="3.2" strokeLinecap="round" />
  </AppIcon>
);

const AppleTv = () => (
  <AppIcon id="appletv" from="#2b3432" to="#0d1112">
    <g transform="translate(9 20) scale(0.055)">
      <path
        d="M318.700 268.700c-.2-36.700 16.400-64.400 50-84.800-18.800-26.900-47.200-41.700-84.700-44.600-35.500-2.800-74.300 20.700-88.500 20.700-15 0-49.400-19.700-76.400-19.700C63.300 141.200 4 184.800 4 273.500q0 39.300 14.400 81.200c12.800 36.700 59 126.700 107.200 125.200 25.200-.6 43-17.900 75.800-17.900 31.800 0 48.300 17.900 76.400 17.900 48.600-.7 90.400-82.500 102.600-119.300-65.200-30.700-61.700-90-61.700-91.900zm-56.600-164.200c27.300-32.400 24.800-61.900 24-72.500-24.100 1.400-52 16.400-67.900 34.900-17.500 19.800-27.800 44.300-25.600 71.900 26.100 2 49.900-11.400 69.500-34.300z"
        fill="#fff"
      />
    </g>
    <text x="46" y="46" textAnchor="middle" fontSize="29" fontWeight="500" letterSpacing="-0.5" fill="#fff" fontFamily="Inter, sans-serif">
      tv
    </text>
  </AppIcon>
);

const Music = () => (
  <AppIcon id="music" from="#ea6a7c" to="#e83a40">
    <path d="M27 50V20l21-6v31" fill="none" stroke="#fff" strokeWidth="4" strokeLinejoin="round" />
    <path d="M26 18l24-6v12l-24 6z" fill="#fff" />
    <ellipse cx="20.5" cy="51" rx="7.5" ry="6.5" fill="#fff" />
    <ellipse cx="43" cy="46" rx="7.5" ry="6.5" fill="#fff" />
  </AppIcon>
);

const Podcasts = () => (
  <AppIcon id="podcasts" from="#b96be8" to="#6c2ba8">
    <path d="M23 52A24 24 0 1 1 47 52M26 43a14.500 14.500 0 1 1 18 0" fill="none" stroke="#fff" strokeWidth="3.4" strokeLinecap="round" />
    <circle cx="35" cy="31" r="6" fill="#fff" />
    <path d="M29 43q0-4 6-4t6 4l-2 15q-.6 4-4 4t-4-4z" fill="#fff" />
  </AppIcon>
);

const AppStore = () => (
  <AppIcon id="appstore" from="#4fb4f0" to="#1f5fdc">
    <path d="M38 16 22 43M31.500 16 52 52M13 43h43M19.500 49.500l-2.500 4" stroke="#fff" strokeWidth="6" strokeLinecap="round" />
  </AppIcon>
);

const Settings = () => (
  <AppIcon id="settings" from="#d9dde0" to="#8d8c88">
    <circle cx="35" cy="35" r="27" fill="#3f4042" />
    <circle cx="35" cy="35" r="28" fill="none" stroke="#303133" strokeWidth="4" strokeDasharray="1.6 1.4" />
    <circle cx="35" cy="35" r="22" fill="none" stroke="#8d9092" strokeWidth="3.5" />
    <circle cx="35" cy="35" r="13" fill="#707375" stroke="#2b2c2e" strokeWidth="4" />
    <path d="M35 35h24M35 35 23 14.500M35 35 23 55.500" stroke="#b9bdbf" strokeWidth="3.4" />
    <circle cx="35" cy="35" r="4" fill="#3a3b3d" stroke="#c3c6c8" strokeWidth="1.5" />
  </AppIcon>
);

const Chrome = () => (
  <AppIcon id="chrome" from="#f6f3f2" to="#e9e6e5">
    <circle cx="35" cy="35" r="30" fill="#4ea257" />
    <path d="M35 20h26.500A30 30 0 0 1 35 65l13-22.500z" fill="#f5bd42" />
    <path d="M9 20a30 30 0 0 1 52.500 0H35L22 42.500z" fill="#de4c3f" />
    <circle cx="35" cy="34.5" r="15" fill="#fff" />
    <circle cx="35" cy="34.5" r="12" fill="#3b7be8" />
  </AppIcon>
);

const Teams = ({ id = "teams" }: { id?: string }) => (
  <AppIcon id={id} from="#ffffff" to="#ffffff">
    <circle cx="52" cy="21" r="5.5" fill="#5059c9" />
    <path d="M44 30h14q2 0 2 2v10c0 10-12 12-16 6z" fill="#5059c9" />
    <circle cx="37" cy="19" r="7.5" fill="#7b83eb" />
    <path d="M24 30h25v14c0 18-25 18-25 0z" fill="#7b83eb" />
    <rect x="9" y="22" width="26" height="26" rx="3" fill="#4048b5" />
    <text x="22" y="42" textAnchor="middle" fontSize="19" fontWeight="700" fill="#fff" fontFamily="Inter, sans-serif">
      T
    </text>
  </AppIcon>
);

const Excel = () => (
  <AppIcon id="excel" from="#ffffff" to="#ffffff">
    <rect x="19" y="12" width="39" height="46" rx="2" fill="#2d5c3a" />
    <path d="M19 12h20v12H19z" fill="#4aa06a" />
    <path d="M39 12h19v12H39z" fill="#5ec488" />
    <path d="M19 24h20v11.500H19z" fill="#35784a" />
    <path d="M39 24h19v11.500H39z" fill="#4aa06a" />
    <path d="M39 35.500h19V47H39z" fill="#35784a" />
    <rect x="6" y="22" width="26" height="26" rx="2.5" fill="#2f7d45" />
    <text x="19" y="42" textAnchor="middle" fontSize="19" fontWeight="700" fill="#fff" fontFamily="Inter, sans-serif">
      X
    </text>
  </AppIcon>
);

const Outlook = ({ id = "outlook" }: { id?: string }) => (
  <AppIcon id={id} from="#ffffff" to="#ffffff">
    <path d="M20 12h36v34H20z" fill="#2e8fdc" />
    <path d="M20 12h12v12H20z" fill="#1a5aa8" />
    <path d="M44 12h12v22H44z" fill="#50bdf2" />
    <path d="M32 24h12v11H32z" fill="#2478c8" />
    <path d="M18 35h39v23H18z" fill="#4aaae8" />
    <path d="M31 40h18l-8 7z" fill="#2464b4" />
    <path d="M40 47l17-10v21z" fill="#3b9be4" />
    <rect x="6" y="22" width="26" height="26" rx="2.5" fill="#2b6fcb" />
    <text x="19" y="42" textAnchor="middle" fontSize="19" fontWeight="700" fill="#fff" fontFamily="Inter, sans-serif">
      O
    </text>
  </AppIcon>
);

const VsCode = () => (
  <AppIcon id="vscode" from="#ffffff" to="#ffffff">
    <path d="M47 11v15L15 49l-5-4v-2z" fill="#2a68a8" />
    <path d="M47 60V45L15 22l-5 4v2z" fill="#3478c0" />
    <path d="M46 11 59 17v37l-13 6z" fill="#4a9fea" />
  </AppIcon>
);

const Preview = ({ id = "preview" }: { id?: string }) => (
  <svg viewBox="0 0 74 74" className="size-[74px]">
    <rect x="2" y="2" width="70" height="70" rx="16" fill="#eceae6" />
    <defs>
      <clipPath id={id}>
        <rect x="7" y="7" width="60" height="60" rx="11" />
      </clipPath>
    </defs>
    <g clipPath={"url(#" + id + ")"}>
      <rect width="74" height="40" fill="#a3c0ee" />
      <rect y="34" width="74" height="6" fill="#c9cfe2" />
      <rect y="39" width="74" height="12" fill="#23406e" />
      <rect y="51" width="74" height="23" fill="#c3cdd8" />
      <path d="M7 48l12-2 4 4-10 4zM16 64l12-6 8 6-6 6H18z" fill="#544538" />
    </g>
    <path d="M42 50h26l5 18q0 5-5 5H40q-6 0-4-6z" fill="#cfcdcb" stroke="#5c5856" strokeWidth="1.5" />
    <rect x="45" y="55" width="16" height="12" fill="#f4f4f4" />
    <rect x="39" y="37" width="31" height="15" rx="3" fill="#141414" />
    <path d="M40 40q14-4 29 0" stroke="#555" strokeWidth="1.5" fill="none" />
  </svg>
);

/* ---------- Dock right section: documents and minimised windows ---------- */

const DiskImage = () => (
  <svg viewBox="0 0 56 80" className="h-20 w-14">
    <path d="M0 8V80h56V42q-4-8-10-16T34 5H6L0 9z" fill="#fff" />
    <path d="M6 0h24q8 1 12 6l11-1v24Q46 12 34 8H0l6-3z" fill="#f0f0f0" />
    <path d="M30 1q16 6 23 40-4-14-16-16 3-14-7-24z" fill="#d2d2d2" />
    <path d="M13 35h30l2 28H11z" fill="#b3babb" />
    <rect x="17" y="36" width="17" height="5" fill="#26292a" />
    <circle cx="28" cy="50" r="10.5" fill="#c6cccd" stroke="#929a9c" strokeWidth="1" />
    <circle cx="28" cy="50" r="3" fill="#eef0f0" />
    <rect x="11" y="63" width="34" height="6" fill="#606668" />
    <path d="M15 64h4v4h-4zM26 64h12v4H26z" fill="#1d1f20" />
  </svg>
);

function Thumb({ children, badge, height }: { badge?: React.ReactNode; height: string } & Kids) {
  return (
    <div className="relative flex h-20 w-[81px] items-center">
      <svg viewBox="0 0 81 63" preserveAspectRatio="none" className={height + " w-[81px] drop-shadow-[0_1px_1px_rgba(0,0,0,0.4)]"}>
        {children}
      </svg>
      {badge && <div className="absolute right-[2px] bottom-0 size-[26px] [&>svg]:size-[26px]">{badge}</div>}
    </div>
  );
}

const t = { fontFamily: "Inter, sans-serif", textAnchor: "middle" as const };

const AnyConnect = () => (
  <div className="relative flex h-20 w-[81px] items-center pb-[1px]">
    <svg viewBox="0 0 81 63" className="h-[63px] w-[81px]">
      <rect width="81" height="63" rx="2.5" fill="#f1f1f1" />
      <rect x="1" y="8" width="79" height="49" fill="#2b7fb0" />
      <rect x="3" y="10" width="75" height="22" fill="#fff" />
      <rect x="3" y="34.5" width="75" height="21" fill="#fff" />
      <circle cx="3.5" cy="3" r="1.5" fill="#e0483c" />
      <circle cx="7" cy="3" r="1.5" fill="#f0b23c" />
      <circle cx="10.5" cy="3" r="1.5" fill="#46a848" />
      <text {...t} x="40" y="3.8" fontSize="3" fontWeight="700" fill="#333">AnyConnect</text>
      <text {...t} x="40" y="6.9" fontSize="2.6" fill="#333">Secure Mobility Client</text>
      <path d="M68 4h9M69 2v3M72 2v3M75 2v3" stroke="#777" strokeWidth="0.7" />
      <circle cx="11" cy="15" r="4" fill="none" stroke="#8c8c8c" strokeWidth="2" />
      <rect x="5.5" y="16" width="10" height="8" rx="1" fill="#c98f3a" />
      <text {...t} textAnchor="start" x="18.5" y="14" fontSize="3" fontWeight="700" fill="#333">VPN:</text>
      <text {...t} textAnchor="start" x="18.5" y="17.5" fontSize="2.2" fill="#444">Use a browser to gain access.</text>
      <text {...t} x="69" y="23.5" fontSize="2.6" fill="#444">Connect</text>
      <text {...t} textAnchor="start" x="5" y="30" fontSize="2.4" fill="#999">Web Authentication Required</text>
      <path d="M5.500 37h10v6q-1 4-5 6-4-2-5-6z" fill="#4a6b8c" />
      <text {...t} textAnchor="start" x="18.5" y="38" fontSize="3" fontWeight="700" fill="#333">System Scan:</text>
      <text {...t} textAnchor="start" x="18.5" y="41.5" fontSize="2.2" fill="#444">System scan not required on current Wi-Fi.</text>
      <path d="M4 60h3M9 60h3" stroke="#333" strokeWidth="2" />
    </svg>
    <CiscoBall className="absolute right-0 -bottom-[1px] size-7" />
  </div>
);

const JamfConnect = () => (
  <div className="flex h-20 w-[81px] items-center pb-[1px]">
    <svg viewBox="0 0 81 60" className="h-[60px] w-[81px]">
      <rect width="81" height="60" rx="2.5" fill="#362b2b" />
      <rect width="81" height="5" rx="2" fill="#2a2121" />
      <circle cx="3" cy="2.8" r="1.3" fill="#d8483c" />
      <circle cx="6.5" cy="2.8" r="1.3" fill="#e0a53c" />
      <circle cx="10" cy="2.8" r="1.3" fill="#666" />
      <text {...t} x="41" y="4" fontSize="2.6" fill="#888">Welcome to Jamf Connect</text>
      <path d="M7 12h7v4H9v4H7z" fill="#5c86c4" />
      <path d="M10 17h4v-3h1v6h-5z" fill="#9db8dc" />
      <text {...t} x="25.5" y="20" fontSize="9.5" textLength="19" lengthAdjust="spacingAndGlyphs" fontWeight="600" fill="#e6e2e2">jamf</text>
      <path d="M37.500 9v14" stroke="#8a8080" strokeWidth="0.7" />
      <text {...t} x="57" y="19.5" fontSize="7.6" textLength="35" lengthAdjust="spacingAndGlyphs" fill="#9a9191">CONNECT</text>
      <text {...t} x="40.5" y="29" fontSize="2.2" fill="#d5cfcf">Jamf Connect allows you to manage your computer network password</text>
      <text {...t} x="40.5" y="32" fontSize="2.2" fill="#d5cfcf">and keep it in sync with your local password on your Mac.</text>
      <text {...t} x="40.5" y="38" fontSize="2.2" fill="#d5cfcf">To use Jamf Connect, click the following menu bar icon:</text>
      <path d="M40 41l2 3h-2z" stroke="#d5cfcf" strokeWidth="0.6" />
      <text {...t} x="40.5" y="49" fontSize="2.2" fill="#c5bfbf">Version: 2.20.0 (Build 8849)</text>
      <text {...t} x="20" y="56" fontSize="2.2" fill="#c5bfbf">Don't show this window again</text>
      <rect x="46" y="53" width="15" height="4" rx="1" fill="#7a7171" />
      <rect x="63" y="53" width="14" height="4" rx="1" fill="#7a7171" />
    </svg>
  </div>
);

const MailCompose = () => (
  <Thumb height="h-[46px]" badge={<Outlook id="ob1" />}>
    <rect width="81" height="63" fill="#1e1f1f" />
    <rect width="81" height="4" fill="#38231f" />
    <path d="M1 8h15M6 12h22M6 16h18M6 19h14" stroke="#8a8a8a" strokeWidth="1" strokeDasharray="3 0.6" />
    <rect x="1" y="9.5" width="3" height="4" fill="#c8463a" />
    <rect x="5" y="19" width="75" height="4" fill="#3c3d3d" />
    <path d="M6 24h12" stroke="#2a6cb4" strokeWidth="1" />
    <rect x="55" y="27" width="26" height="3.5" fill="#4c2a22" />
    <rect x="55" y="41" width="26" height="3.5" fill="#8c2a18" />
    <path d="M53 27v36" stroke="#3b3b3b" strokeWidth="0.6" />
  </Thumb>
);

const docLines = Array.from({ length: 24 }, (_, i) => 5 + i * 2.35);
const DocWindow = () => (
  <Thumb height="h-[58px]" badge={<Preview id="pb" />}>
    <rect width="81" height="63" fill="#6e5c58" />
    <rect width="81" height="4" fill="#4c3f3c" />
    <rect x="14" y="4" width="67" height="59" fill="#fdfdfd" />
    <rect x="2.5" y="6" width="8" height="12" fill="#eee" />
    <rect x="2.5" y="21" width="8" height="10" fill="#fff" />
    {docLines.map((y, i) => (
      <path key={y} d={"M22 " + y + "h" + (i % 4 === 3 ? 0 : i % 4 === 2 ? 38 : 51)} stroke="#8a8a8d" strokeWidth="1" strokeDasharray="4 0.7 2 0.6" />
    ))}
  </Thumb>
);

const TeamsWindow = () => (
  <Thumb height="h-[40px]" badge={<Teams id="tb" />}>
    <rect width="81" height="63" fill="#f4f4f6" />
    <rect width="81" height="4.5" fill="#4a4e9c" />
    <rect x="24" y="1" width="32" height="3" fill="#e4e5f4" />
    <rect y="4.5" width="5" height="58.5" fill="#e6e6ea" />
    <rect x="5" y="4.5" width="21" height="58.5" fill="#fbfbfc" />
    <path d="M7 9h4M7 18h10M7 25h12M9 33h14M9 40h12M9 47h13M9 55h12M28 9h14M31 15h8M31 20h7M52 32h3M50 42h4M74 24h4M74 27h3M74 47h3" stroke="#9a9aa6" strokeWidth="1.5" />
    <path d="M6.500 31h3v3h-3zM6.500 38h3v3h-3zM6.500 45h3v3h-3z" fill="#4f55b0" />
    <path d="M40 37h36" stroke="#a9acdf" strokeWidth="3" />
    <path d="M29 60h24" stroke="#777" strokeWidth="1.5" strokeDasharray="1.5 2" />
  </Thumb>
);

const MailWindow = () => (
  <Thumb height="h-[46px]" badge={<Outlook id="ob2" />}>
    <rect width="81" height="63" fill="#1b1c1e" />
    <rect y="4" width="15" height="59" fill="#47423f" />
    <rect x="5" y="4" width="8" height="2.5" fill="#2b7ce0" />
    <rect x="15" y="4" width="66" height="3" fill="#3e4144" />
    <path d="M5 11h8M5 15h6M5 19h7M5 23h6M5 27h7M5 31h5M5 35h6" stroke="#99918c" strokeWidth="0.8" />
    <path d="M19 11h8M21 17h10M21 23h8M21 33h9M21 40h10M21 47h8M21 54h9M39 12h24M39 20h10" stroke="#75787a" strokeWidth="0.9" />
    <path d="M17 13h2.500v3H17zM36 10h2.500v3H36z" fill="#d04a40" />
    <path d="M17 22h2.500v3H17zM17 53h2.500v3H17z" fill="#3f8fd8" />
    <path d="M17 31h2.500v3H17zM17 38h2.500v3H17z" fill="#c050a0" />
    <path d="M36 31h4M43 31h10M43 34h8M43 42h7" stroke="#2c5ca0" strokeWidth="1.5" />
    <path d="M36 48h18v13H36z" fill="#27405f" />
  </Thumb>
);

const Trash = () => (
  <svg viewBox="0 0 62 80" className="h-20 w-[62px]">
    <defs>
      <linearGradient id="can" x1="0" x2="1" y1="0" y2="0">
        <stop offset="0" stopColor="#6c7072" />
        <stop offset="0.35" stopColor="#92969a" />
        <stop offset="0.7" stopColor="#727678" />
        <stop offset="1" stopColor="#505456" />
      </linearGradient>
    </defs>
    <ellipse cx="31" cy="13" rx="30" ry="6" fill="#55585a" />
    <path d="M6 12 11 4l9 2 5-5 9 6 6-5 8 4 7 3-3 8-20 4H14z" fill="#e9e9e9" />
    <path d="M14 6l6 8M36 4l-3 12M44 6l4 9" stroke="#4e4e50" strokeWidth="1.5" />
    <path d="M20 9l8-1-3 5z" fill="#48b8a0" />
    <path d="M36 11l7-1 1 5-7 1z" fill="#c07038" />
    <path d="M40 12l6-4 2 5z" fill="#3a5ca8" />
    <path d="M0.500 12q12 6 30 6t31-6L54 73q-1 7-23 7T8 73z" fill="url(#can)" />
    <path d="M12 20h14q-6 14-12 0zM36 20h14l-5 9z" fill="#b3b6b8" opacity="0.5" />
    <path d="M8 66q22 8 46 0l-1 7q-1 6-22 6T9 73z" fill="#5c6062" opacity="0.7" />
  </svg>
);

function Slot({ children, running, badge }: { running?: boolean; badge?: string } & Kids) {
  return (
    <div className="relative flex h-[111px] w-[94.15px] shrink-0 flex-col items-center">
      <div className="flex h-[102px] items-center">{children}</div>
      {running && <span className="size-2 rounded-full bg-[#c49aae]" />}
      {badge && (
        <span
          className={
            (badge.length > 1 ? "left-[41px] px-[4px]" : "left-[61px] w-8") +
            " absolute top-[8px] flex h-8 items-center justify-center rounded-full bg-[#e0483b] text-[19px] tracking-[-0.5px] text-white"
          }
        >
          {badge}
        </span>
      )}
    </div>
  );
}

function DockRule() {
  return (
    <div className="flex w-[44px] shrink-0 justify-center pt-[14px]">
      <span className="h-[84px] w-0.5 bg-[#7d5a66]" />
    </div>
  );
}

function Dock() {
  return (
    <nav className="mt-[18px] ml-[77px] flex h-[115px] w-[3207px] rounded-[36px] border-2 border-white/20 bg-[linear-gradient(90deg,#1b2029_0%,#1c2028_15%,#341621_20%,#3f1724_26%,#471c2e_30%,#4a1e22_37%,#561f1a_42%,#4b1a22_46%,#421626_50%,#3c1722_56%,#421a2c_64%,#481b33_70%,#4a1a28_78%,#582022_85%,#60201c_92%,#6e2216_100%)] pl-[4px] shadow-[0_0_0_1px_rgba(0,0,0,0.6)]">
      <Slot running><Finder /></Slot>
      <Slot><Launchpad /></Slot>
      <Slot><Safari /></Slot>
      <Slot><Tor /></Slot>
      <Slot><Messages /></Slot>
      <Slot><Mail /></Slot>
      <Slot><Maps /></Slot>
      <Slot><Calendar /></Slot>
      <Slot><Contacts /></Slot>
      <Slot><Reminders /></Slot>
      <Slot><Notes /></Slot>
      <Slot><FaceTime /></Slot>
      <Slot><Freeform /></Slot>
      <Slot><AppleTv /></Slot>
      <Slot><Music /></Slot>
      <Slot><Podcasts /></Slot>
      <Slot><AppStore /></Slot>
      <Slot running badge="1"><Settings /></Slot>
      <DockRule />
      <Slot running><Chrome /></Slot>
      <Slot running><Teams /></Slot>
      <Slot running><Excel /></Slot>
      <Slot running badge="9388"><Outlook /></Slot>
      <Slot running><VsCode /></Slot>
      <Slot running><CiscoBall className="size-[74px]" /></Slot>
      <Slot running><Preview /></Slot>
      <DockRule />
      <Slot><DiskImage /></Slot>
      <Slot><AnyConnect /></Slot>
      <Slot><JamfConnect /></Slot>
      <Slot><MailCompose /></Slot>
      <Slot><DocWindow /></Slot>
      <Slot><TeamsWindow /></Slot>
      <Slot><MailWindow /></Slot>
      <Slot><Trash /></Slot>
    </nav>
  );
}

export default function App() {
  return (
    <div className="flex h-[2100px] w-[3360px] flex-col overflow-hidden bg-[#05090e] font-['Inter','Noto_Sans',sans-serif]">
      <MenuBar />
      <div className="mt-[2px] flex h-[1906px] flex-col overflow-hidden rounded-[20px] border-2 border-[#66686b] bg-[#35393d]">
        <TabStrip />
        <Toolbar />
        <BookmarksBar />
        <div className="flex grow items-center justify-center pt-[2px]">
          <NotFoundCard />
        </div>
      </div>
      <div className="flex h-[144px] items-start bg-[linear-gradient(180deg,rgba(0,0,0,0.75)_0%,rgba(0,0,0,0.35)_30%,transparent_60%),linear-gradient(90deg,#06141f_0%,#06131f_20%,#2c0422_21%,#471434_32%,#38100f_33%,#541a18_43%,#4a0a28_44%,#30071f_55%,#5e1f4e_68%,#30062a_74%,#3c0a2c_80%,#4e1426_90%,#8a2a14_100%)]">
        <Dock />
      </div>
    </div>
  );
}
